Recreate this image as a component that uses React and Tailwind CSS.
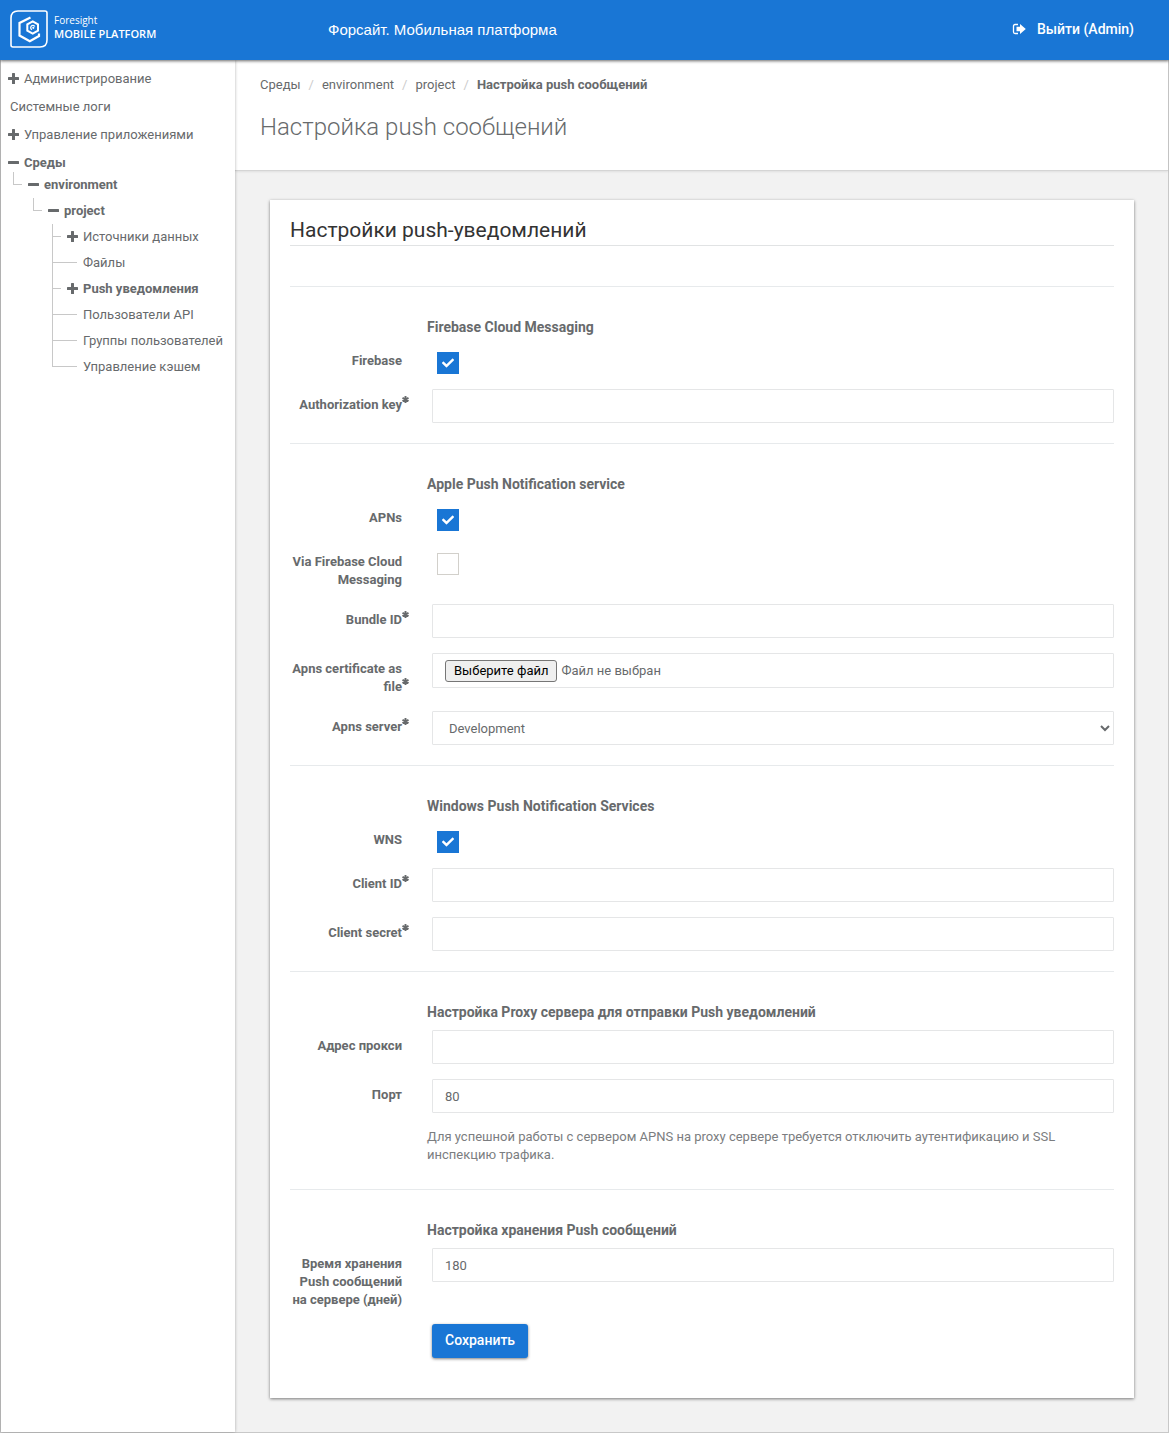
import React from 'react';
import { FaCheck } from 'react-icons/fa';

const sections = [
  {
    title: 'Firebase Cloud Messaging',
    fields: [
      { id: 'firebase', label: 'Firebase', type: 'checkbox', value: true },
      { id: 'auth-key', label: 'Authorization key', required: true },
    ],
  },
  {
    title: 'Apple Push Notification service',
    fields: [
      { id: 'apns', label: 'APNs', type: 'checkbox', value: true },
      { id: 'via-firebase', label: 'Via Firebase Cloud Messaging', type: 'checkbox', value: false },
      { id: 'bundle-id', label: 'Bundle ID', required: true },
      { id: 'apns-cert', label: 'Apns certificate as file', type: 'file', required: true },
      { id: 'apns-server', label: 'Apns server', type: 'select', options: ['Development', 'Production'], required: true },
    ],
  },
  {
    title: 'Windows Push Notification Services',
    fields: [
      { id: 'wns', label: 'WNS', type: 'checkbox', value: true },
      { id: 'client-id', label: 'Client ID', required: true },
      { id: 'client-secret', label: 'Client secret', required: true },
    ],
  },
  {
    title: 'Настройка Proxy сервера для отправки Push уведомлений',
    fields: [
      { id: 'proxy-host', label: 'Адрес прокси' },
      { id: 'proxy-port', label: 'Порт', value: '80' },
    ],
    note: 'Для успешной работы с сервером APNS на proxy сервере требуется отключить аутентификацию и SSL инспекцию трафика.',
  },
  {
    title: 'Настройка хранения Push сообщений',
    fields: [{ id: 'ttl', label: 'Время хранения Push сообщений на сервере (дней)', value: '180' }],
    submit: 'Сохранить',
  },
];

const projectItems = [
  { label: 'Источники данных', icon: 'plus' },
  { label: 'Файлы' },
  { label: 'Push уведомления', icon: 'plus', active: true },
  { label: 'Пользователи API' },
  { label: 'Группы пользователей' },
  { label: 'Управление кэшем' },
];

const Logo = () => (
  <svg width="38" height="38" viewBox="0 0 38 38" fill="none" stroke="white" className="shrink-0">
    <path d="M8 1H35Q37 1 37 3V30Q37 37 30 37H3Q1 37 1 35V8Q1 1 8 1Z" strokeWidth="1.600" />
    <path d="M20.500 7.500L9.500 13V25.500L19.800 31.200L29 26V23.500" strokeWidth="2.200" />
    <path d="M22.700 11.300L28 14.400V20.600L22.700 23.700L17.300 20.600V14.400Z" strokeWidth="2" />
    <path d="M24.800 16.500A2.200 2.200 0 1 0 22 19.600" strokeWidth="1.300" />
    <circle cx="23.300" cy="17.800" r="1.100" fill="white" stroke="none" />
  </svg>
);

const LogoutIcon = () => (
  <svg width="14" height="12" viewBox="0 0 14 12" fill="none">
    <path d="M6 1.500H3Q1.500 1.500 1.500 3V9Q1.500 10.500 3 10.500H6" stroke="white" strokeWidth="1.300" />
    <path d="M4.500 3.800H8V1L13.800 6L8 11V8.200H4.500Z" fill="white" />
  </svg>
);

const ToggleIcon = ({ type }) => (
  <svg width="11" height="11" viewBox="0 0 11 11" fill="currentColor" className="mr-[5px] mb-px shrink-0">
    <rect x="0" y="4" width="11" height="3" rx="0.500" />
    {type === 'plus' && <rect x="4" y="0" width="3" height="11" rx="0.500" />}
  </svg>
);

const RequiredMark = () => (
  <svg width="7" height="7" viewBox="0 0 7 7" stroke="currentColor" strokeWidth="1.900" className="-mr-[7px] mb-[6px] inline align-baseline">
    <path d="M3.500 0V7M0.500 1.800L6.500 5.200M6.500 1.800L0.500 5.200" />
  </svg>
);

const TreeRow = ({ label, icon, bold, last }) => (
  <div className="flex h-[26px] items-center">
    <span className={`mr-[6px] flex shrink-0 flex-col self-stretch ${icon ? 'w-[9px]' : 'w-[25px]'}`}>
      <span className="h-1/2 border-b border-l border-[#c8c8c8]" />
      {!last && <span className="h-1/2 border-l border-[#c8c8c8]" />}
    </span>
    {icon && <ToggleIcon type={icon} />}
    <a href="#" className={`whitespace-nowrap ${bold ? 'font-bold' : ''}`}>{label}</a>
  </div>
);

const Sidebar = () => (
  <nav className="z-10 w-[234px] shrink-0 bg-white pt-[5px] shadow-[0_0_3px_rgba(0,0,0,0.3)]">
    <ul>
      <li className="flex h-7 items-center pl-[7px]">
        <ToggleIcon type="plus" />
        <a href="#">Администрирование</a>
      </li>
      <li className="flex h-7 items-center pl-[9px]">
        <a href="#">Системные логи</a>
      </li>
      <li className="flex h-7 items-center pl-[7px]">
        <ToggleIcon type="plus" />
        <a href="#">Управление приложениями</a>
      </li>
      <li>
        <div className="flex h-7 items-center pl-[7px]">
          <ToggleIcon type="minus" />
          <a href="#" className="font-bold">Среды</a>
        </div>
        <ul className="-mt-[5px] ml-3">
          <li>
            <TreeRow label="environment" icon="minus" bold last />
            <ul className="ml-5">
              <li>
                <TreeRow label="project" icon="minus" bold last />
                <ul className="ml-[19px]">
                  {projectItems.map((item, index) => (
                    <li key={item.label}>
                      <TreeRow label={item.label} icon={item.icon} bold={item.active} last={index === projectItems.length - 1} />
                    </li>
                  ))}
                </ul>
              </li>
            </ul>
          </li>
        </ul>
      </li>
    </ul>
  </nav>
);

const Control = ({ field }) => {
  const box = 'block w-full rounded-[1px] border border-[#e5e6e7] bg-white px-3';

  if (field.type === 'checkbox') {
    return (
      <div className="ml-[5px] mt-[7px] grid size-[22px] place-items-center">
        <input
          id={field.id}
          type="checkbox"
          defaultChecked={field.value}
          className="peer col-start-1 row-start-1 size-[22px] appearance-none border border-[#d2d0cb] bg-white checked:border-[#1976d5] checked:bg-[#1976d5]"
        />
        <FaCheck className="pointer-events-none invisible col-start-1 row-start-1 size-3 text-white peer-checked:visible" />
      </div>
    );
  }

  if (field.type === 'file') {
    return (
      <div className={`${box} relative flex h-[35px] items-center`}>
        <span className="mr-1 rounded-[3px] border border-[#767676] bg-[#efefef] px-2 leading-5 text-black">Выберите файл</span>
        <span>Файл не выбран</span>
        <input id={field.id} type="file" className="absolute inset-0 w-full cursor-pointer opacity-0" />
      </div>
    );
  }

  if (field.type === 'select') {
    return (
      <select id={field.id} className={`${box} h-[34px]`}>
        {field.options.map((option) => (
          <option key={option}>{option}</option>
        ))}
      </select>
    );
  }

  return <input id={field.id} type="text" defaultValue={field.value} className={`${box} h-[34px]`} />;
};

const Field = ({ field }) => (
  <div className="flex gap-[30px]">
    <label htmlFor={field.id} className="w-28 shrink-0 pt-[7px] text-right font-bold">
      {field.label}
      {field.required && <RequiredMark />}
    </label>
    <div className="min-w-0 flex-1">
      <Control field={field} />
    </div>
  </div>
);

const Section = ({ section }) => (
  <section className="border-t border-[#e7eaec] pb-5 pt-[31px]">
    <h3 className="mb-[9px] ml-[137px] text-sm leading-[18px] font-bold">{section.title}</h3>
    <div className="flex flex-col gap-[15px]">
      {section.fields.map((field) => (
        <Field key={field.id} field={field} />
      ))}
      {section.note && <p className="mb-[5px] ml-[137px] text-[#7b7d80]">{section.note}</p>}
      {section.submit && (
        <button
          type="submit"
          className="ml-[142px] h-[34px] self-start rounded-[3px] bg-[#1976d5] px-[13px] pb-[2px] text-sm font-medium text-white shadow-[0_1px_3px_rgba(0,0,0,0.5)]"
        >
          {section.submit}
        </button>
      )}
    </div>
  </section>
);

export default function App() {
  return (
    <div className="flex min-h-screen flex-col bg-[#f2f2f2] font-['Roboto',sans-serif] text-[13px] leading-[18px] text-[#676a6c]">
      <header className="z-20 flex h-[60px] items-center bg-[#1976d5] pr-[35px] pl-[10px] text-white shadow-[0_1px_3px_rgba(0,0,0,0.6)]">
        <a href="#" className="flex w-[318px] items-center gap-[6px] pb-[2px] font-['Open_Sans',sans-serif]">
          <Logo />
          <span className="flex flex-col pb-1 text-[11px] leading-[14px]">
            <span className="text-[10px]">Foresight</span>
            <span className="font-semibold">MOBILE PLATFORM</span>
          </span>
        </a>
        <span className="font-['Liberation_Sans',sans-serif] text-[15px]">Форсайт. Мобильная платформа</span>
        <a href="#" className="ml-auto flex items-center gap-[11px] pb-[2px] text-sm font-medium">
          <LogoutIcon />
          Выйти (Admin)
        </a>
      </header>

      <div className="flex flex-1 border-x border-b border-[#c8c8c8]">
        <Sidebar />
        <main className="min-w-0 flex-1">
          <div className="h-[111px] border-b border-[#d5d5d5] bg-white px-[25px] pt-4 shadow-[0_1px_2px_rgba(0,0,0,0.08)]">
            <ol className="flex">
              <li><a href="#">Среды</a></li>
              <li className="before:px-2 before:text-[#cccccc] before:content-['/']"><a href="#">environment</a></li>
              <li className="before:px-2 before:text-[#cccccc] before:content-['/']"><a href="#">project</a></li>
              <li className="font-bold before:px-2 before:font-normal before:text-[#cccccc] before:content-['/']">Настройка push сообщений</li>
            </ol>
            <h1 className="mt-[18px] text-2xl leading-[30px] font-light">Настройка push сообщений</h1>
          </div>

          <form className="mt-[29px] mr-[34px] mb-[34px] ml-[35px] bg-white px-5 pt-4 pb-5 shadow-[0_1px_3px_rgba(0,0,0,0.5)]">
            <h2 className="mb-10 border-b border-[#e1e3e4] text-[21px] leading-[29px] text-[#333333]">Настройки push-уведомлений</h2>
            {sections.map((section) => (
              <Section key={section.title} section={section} />
            ))}
          </form>
        </main>
      </div>
    </div>
  );
}
